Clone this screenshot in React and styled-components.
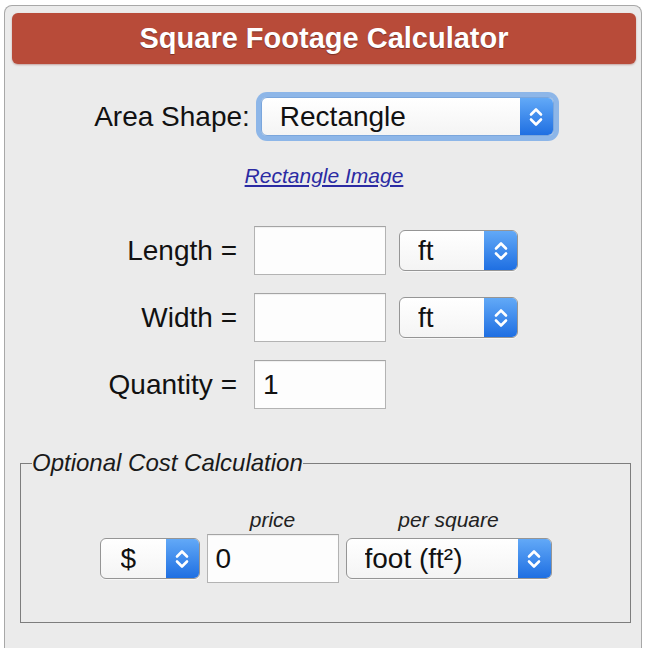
import React from "react";
import styled, { createGlobalStyle } from "styled-components";

const Global = createGlobalStyle`
  html, body { margin: 0; padding: 0; background: #ffffff; overflow: hidden; }
  body { font-family: "Liberation Sans", Arial, Helvetica, sans-serif; color: #111; }
  * { box-sizing: border-box; }
`;

const Panel = styled.div`
  margin: 5px 0 0 4px;
  width: 638px;
  height: 643px;
  border: 1px solid #a8a8a8;
  border-bottom: none;
  border-radius: 8px 8px 0 0;
  background: #ebebeb;
  padding: 7px 5px 0 7px;
`;

const Header = styled.h1`
  margin: 0;
  height: 51px;
  border-radius: 6px;
  background: #b84b39;
  display: flex;
  align-items: center;
  justify-content: center;
  color: #fff;
  font-size: 29px;
  font-weight: 700;
  letter-spacing: 0;
  text-shadow: 0 1px 1px rgba(0, 0, 0, 0.35);
  box-shadow: 0 1px 2px rgba(120, 30, 20, 0.35);
`;

const ShapeRow = styled.div`
  margin-top: 33px;
  display: flex;
  justify-content: center;
  align-items: center;
  gap: 11px;
`;

const Label = styled.span`
  font-size: 28px;
  line-height: 32px;
  color: #111;
`;

const SelectBox = styled.div`
  display: flex;
  width: ${(p) => p.$w}px;
  height: ${(p) => p.$h}px;
  margin-left: ${(p) => p.$ml || 0}px;
  border: 1px solid ${(p) => (p.$focused ? "#7aa6dc" : "#959595")};
  border-radius: 6px;
  background: linear-gradient(#ffffff, #f4f4f4);
  overflow: hidden;
  box-shadow: ${(p) =>
    p.$focused ? "0 0 0 5px rgba(125, 173, 232, 0.85)" : "0 1px 0 rgba(255,255,255,0.6)"};
`;

const NativeSelect = styled.select`
  appearance: none;
  -webkit-appearance: none;
  flex: 1;
  min-width: 0;
  height: 100%;
  border: none;
  background: transparent;
  outline: none;
  font-family: "Liberation Sans", Arial, sans-serif;
  font-size: 28px;
  color: #111;
  padding: 0 0 0 ${(p) => p.$pl || 18}px;
`;

const ArrowBox = styled.div`
  width: 33px;
  flex: none;
  display: flex;
  align-items: center;
  justify-content: center;
  background: linear-gradient(#62a9f7, #1f6fe2);
  pointer-events: none;
`;

const Chevrons = () => (
  <svg width="14" height="22" viewBox="0 0 14 22" fill="none">
    <path d="M2 8.5 L7 3.5 L12 8.5" stroke="#fff" strokeWidth="2.6" strokeLinecap="round" strokeLinejoin="round" />
    <path d="M2 13.5 L7 18.5 L12 13.5" stroke="#fff" strokeWidth="2.6" strokeLinecap="round" strokeLinejoin="round" />
  </svg>
);

const Select = ({ w, h = 41, ml, focused, options, pl }) => (
  <SelectBox $w={w} $h={h} $ml={ml} $focused={focused}>
    <NativeSelect defaultValue={options[0]} $pl={pl}>
      {options.map((o) => (
        <option key={o}>{o}</option>
      ))}
    </NativeSelect>
    <ArrowBox>
      <Chevrons />
    </ArrowBox>
  </SelectBox>
);

const ImageLink = styled.a`
  display: block;
  margin-top: 28px;
  text-align: center;
  font-size: 21px;
  line-height: 24px;
  font-style: italic;
  color: #2b2ba3;
  text-decoration: underline;
  text-underline-offset: 2px;
`;

const DimGrid = styled.div`
  margin: 38px 0 0 92px;
  display: grid;
  grid-template-columns: 150px 132px auto;
  row-gap: 18px;
  align-items: center;
  justify-items: start;
`;

const DimLabel = styled(Label)`
  justify-self: stretch;
  text-align: right;
  padding-right: 17px;
`;

const TextInput = styled.input`
  width: ${(p) => p.$w || 132}px;
  height: 49px;
  border: 1px solid #b3b3b3;
  border-top-color: #a4a4a4;
  background: #fdfdfd;
  font-family: "Liberation Sans", Arial, sans-serif;
  font-size: 28px;
  color: #111;
  padding: 0 8px;
  outline: none;
  box-shadow: inset 0 1px 1px rgba(0, 0, 0, 0.06);
`;

const Fieldset = styled.fieldset`
  margin: 40px 5px 0 8px;
  border: 1px solid #7d7d7d;
  padding: 0 11px 39px;
`;

const Legend = styled.legend`
  padding: 0;
  font-size: 24px;
  font-style: italic;
  color: #1a1a1a;
`;

const CostGrid = styled.div`
  margin-top: 31px;
  display: grid;
  grid-template-columns: 100px 132px 206px;
  column-gap: 7px;
  row-gap: 2px;
  justify-content: center;
  align-items: center;
`;

const SmallLabel = styled.span`
  font-size: 21px;
  line-height: 24px;
  font-style: italic;
  color: #222;
  text-align: center;
`;

export default function App() {
  return (
    <>
      <Global />
      <Panel>
        <Header>Square Footage Calculator</Header>
        <ShapeRow>
          <Label>Area Shape:</Label>
          <Select w={293} h={39} focused options={["Rectangle", "Circle", "Triangle"]} />
        </ShapeRow>
        <ImageLink href="#">Rectangle Image</ImageLink>
        <DimGrid>
          <DimLabel>Length =</DimLabel>
          <TextInput defaultValue="" />
          <Select w={119} ml={13} options={["ft", "in", "yd", "m"]} />
          <DimLabel>Width =</DimLabel>
          <TextInput defaultValue="" />
          <Select w={119} ml={13} options={["ft", "in", "yd", "m"]} />
          <DimLabel>Quantity =</DimLabel>
          <TextInput defaultValue="1" />
          <span />
        </DimGrid>
        <Fieldset>
          <Legend>Optional Cost Calculation</Legend>
          <CostGrid>
            <span />
            <SmallLabel>price</SmallLabel>
            <SmallLabel>per square</SmallLabel>
            <Select w={100} pl={20} options={["$", "€", "£"]} />
            <TextInput defaultValue="0" $w={132} />
            <Select w={206} options={["foot (ft²)", "yard (yd²)", "meter (m²)"]} />
          </CostGrid>
        </Fieldset>
      </Panel>
    </>
  );
}
